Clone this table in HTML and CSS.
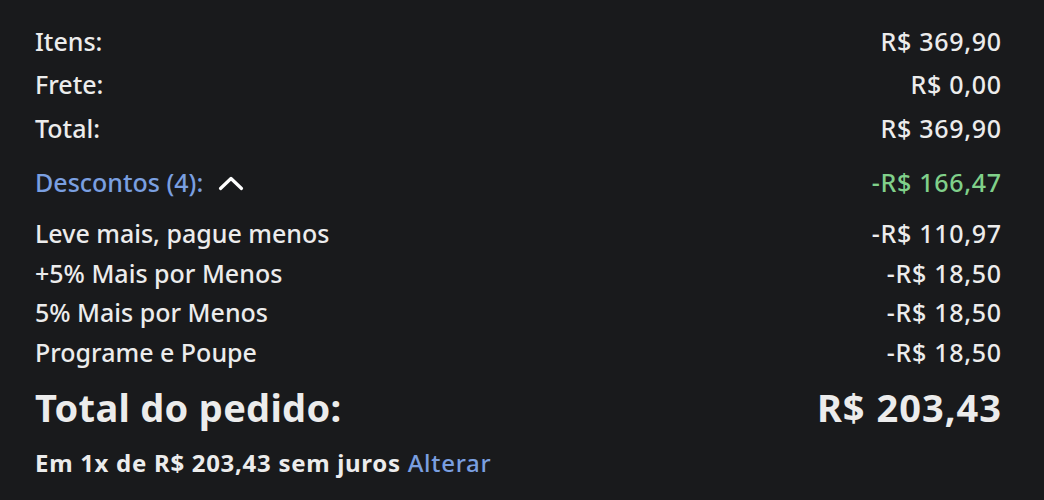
FILE: index.html
```html
<!DOCTYPE html>
<html lang="pt-BR">
<head>
<meta charset="utf-8">
<link rel="stylesheet" href="styles.css">
</head>
<body>
<div class="summary">
  <div class="row"><span>Itens:</span><span class="amt">R$ 369,90</span></div>
  <div class="row"><span>Frete:</span><span class="amt">R$ 0,00</span></div>
  <div class="row"><span>Total:</span><span class="amt">R$ 369,90</span></div>
  <div class="row discounts">
    <span class="link">Descontos (4):<svg class="chev" viewBox="0 0 26 16" width="26" height="16"><path d="M2.5 13.5 L13 3.5 L23.5 13.5" fill="none" stroke="#ffffff" stroke-width="3.2" stroke-linecap="round" stroke-linejoin="round"/></svg></span>
    <span class="amt green">-R$ 166,47</span>
  </div>
  <div class="items">
    <div class="row sub"><span>Leve mais, pague menos</span><span class="amt">-R$ 110,97</span></div>
    <div class="row sub"><span>+5% Mais por Menos</span><span class="amt">-R$ 18,50</span></div>
    <div class="row sub"><span>5% Mais por Menos</span><span class="amt">-R$ 18,50</span></div>
    <div class="row sub"><span>Programe e Poupe</span><span class="amt">-R$ 18,50</span></div>
  </div>
  <div class="row grand"><span>Total do pedido:</span><span class="amt">R$ 203,43</span></div>
  <div class="installments">Em 1x de R$ 203,43 sem juros <span class="link">Alterar</span></div>
</div>
</body>
</html>
```
FILE: styles.css
```css
html, body {
  margin: 0;
  padding: 0;
  background: #191a1c;
}
body {
  font-family: "Noto Sans", "Open Sans", sans-serif;
  color: #ececec;
  width: 1044px;
  height: 500px;
  overflow: hidden;
}
.summary {
  padding: 19px 43px 0 35px;
}
.row {
  display: flex;
  justify-content: space-between;
  align-items: center;
  height: 43.5px;
  font-size: 25px;
  font-weight: 500;
  letter-spacing: 0;
}
.amt {
  letter-spacing: 0.7px;
  margin-right: -0.7px;
}
.discounts {
  margin-top: 10px;
  height: 44px;
}
.link {
  color: #7a9fe0;
}
.chev {
  margin-left: 15px;
  vertical-align: 1px;
}
.green {
  color: #80d08a;
}
.items {
  margin-top: 10px;
}
.row.sub {
  height: 39.5px;
}
.row.grand {
  margin-top: 11.5px;
  height: 48px;
  font-size: 38px;
  font-weight: 700;
  letter-spacing: 0.3px;
}
.row.grand .amt {
  letter-spacing: 1px;
  margin-right: -1px;
}
.installments {
  margin-top: 16px;
  height: 32px;
  line-height: 32px;
  font-size: 24px;
  font-weight: 700;
  letter-spacing: 0.7px;
}
.installments .link {
  font-weight: 500;
}
```
